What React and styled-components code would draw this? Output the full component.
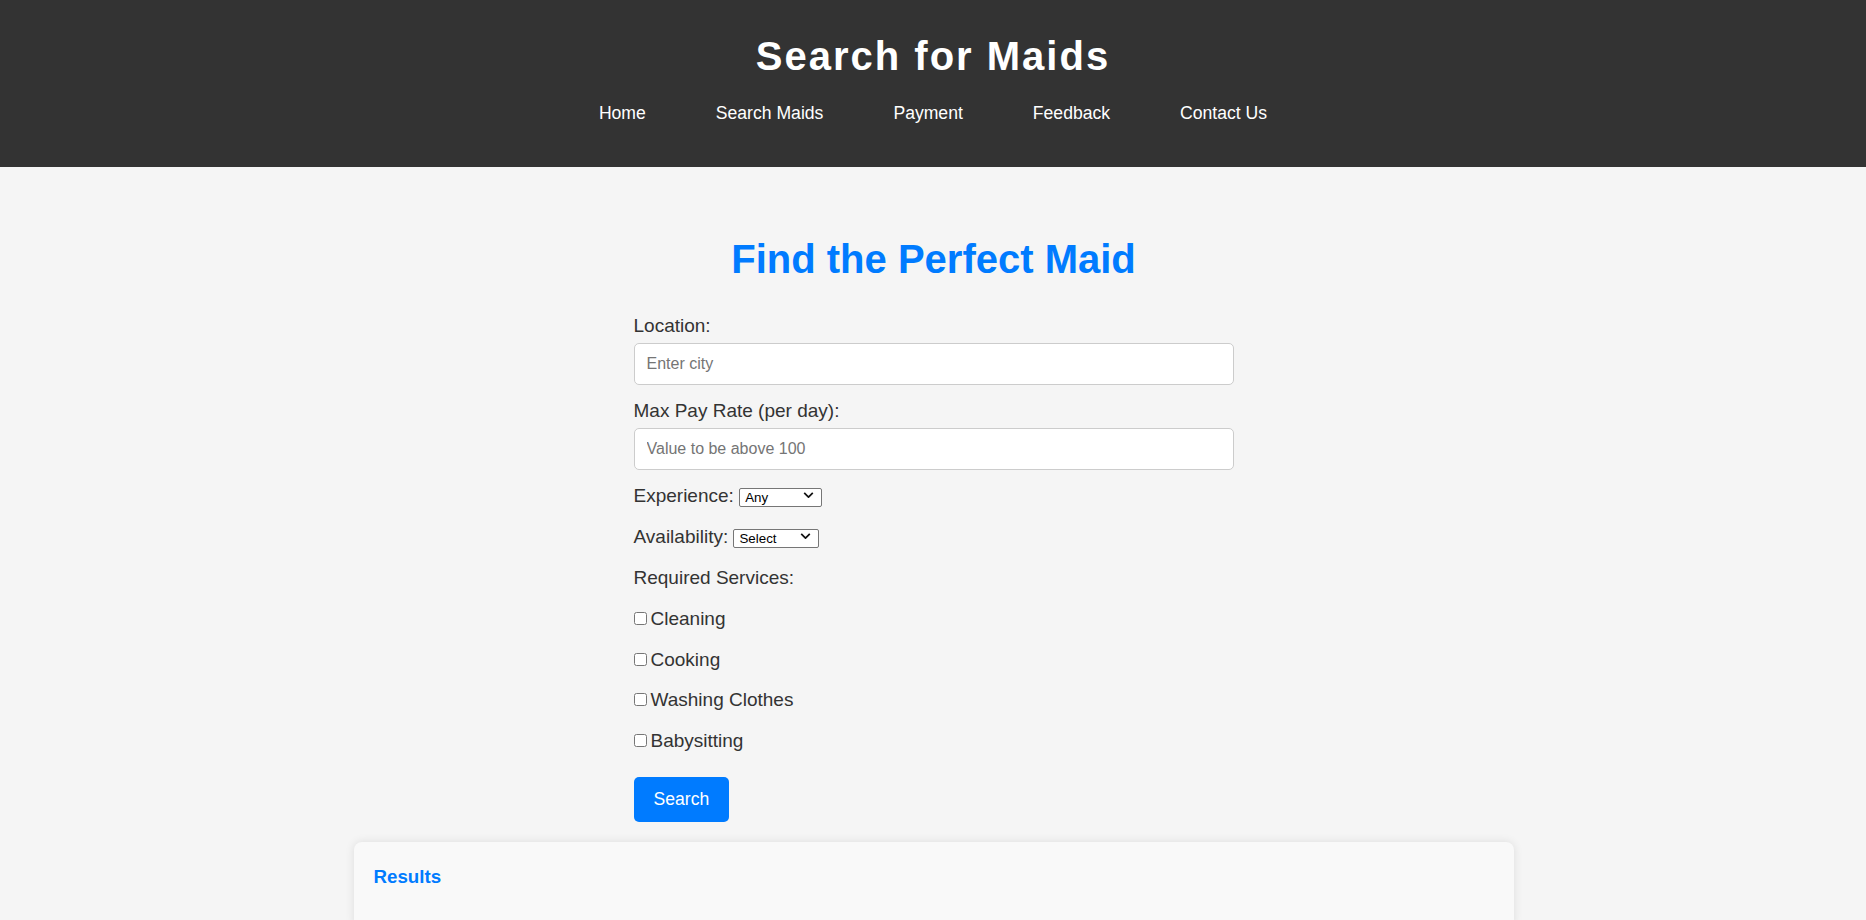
import React from 'react';
import styled, { createGlobalStyle } from 'styled-components';

const GlobalStyle = createGlobalStyle`
    body {
        margin: 0;
        font-family: "Liberation Sans", Arial, sans-serif;
        background-color: #f5f5f5;
        color: #333;
    }
`;

const services = ['Cleaning', 'Cooking', 'Washing Clothes', 'Babysitting'];
const navItems = ['Home', 'Search Maids', 'Payment', 'Feedback', 'Contact Us'];

const Dropdown = ({ width, children, ...rest }) => (
    <SelectWrap>
        <Select $width={width} {...rest}>{children}</Select>
        <Chevron viewBox="0 0 12 7" aria-hidden="true">
            <path d="M1 1l5 5 5-5" />
        </Chevron>
    </SelectWrap>
);

const App = () => {
    return (
        <>
            <GlobalStyle />
            <Header>
                <SiteTitle>Search for Maids</SiteTitle>
                <Nav>
                    {navItems.map((item) => (
                        <NavLink key={item} href="#">{item}</NavLink>
                    ))}
                </Nav>
            </Header>

            <Main>
                <PageTitle>Find the Perfect Maid</PageTitle>
                <SearchForm onSubmit={(e) => e.preventDefault()}>
                    <Label htmlFor="location">Location:</Label>
                    <TextInput id="location" type="text" placeholder="Enter city" />

                    <Label htmlFor="pay">Max Pay Rate (per day):</Label>
                    <TextInput id="pay" type="number" placeholder="Value to be above 100" />

                    <Row>
                        Experience:{' '}
                        <Dropdown width={83} defaultValue="any">
                            <option value="any">Any</option>
                            <option value="1">1+ years</option>
                            <option value="3">3+ years</option>
                            <option value="5">5+ years</option>
                        </Dropdown>
                    </Row>

                    <Row>
                        Availability:{' '}
                        <Dropdown width={86} defaultValue="">
                            <option value="">Select</option>
                            <option value="full">Full-time</option>
                            <option value="part">Part-time</option>
                        </Dropdown>
                    </Row>

                    <Row>Required Services:</Row>

                    {services.map((service) => (
                        <Row as="label" key={service}>
                            <Checkbox type="checkbox" />
                            {service}
                        </Row>
                    ))}

                    <SearchButton type="submit">Search</SearchButton>
                </SearchForm>

                <ResultsCard>
                    <ResultsTitle>Results</ResultsTitle>
                </ResultsCard>
            </Main>
        </>
    );
};

const Header = styled.header`
    background-color: #333;
    color: #fff;
    text-align: center;
    padding: 34px 0 43px;
`;

const SiteTitle = styled.h1`
    margin: 0 0 24px;
    font-size: 40px;
    font-weight: 700;
    letter-spacing: 2px;
    line-height: normal;
`;

const Nav = styled.nav`
    display: flex;
    justify-content: center;
    gap: 70px;
`;

const NavLink = styled.a`
    color: #fff;
    text-decoration: none;
    font-size: 17.6px;
    line-height: normal;
`;

const Main = styled.main`
    padding: 40px 20px 0 21px;
`;

const PageTitle = styled.h2`
    margin: 30px 0 33px;
    text-align: center;
    color: #007bff;
    font-size: 40px;
    font-weight: 700;
    line-height: normal;
`;

const SearchForm = styled.form`
    width: 600px;
    margin: 0 auto;
    display: flex;
    flex-direction: column;
    align-items: flex-start;
`;

const Label = styled.label`
    display: block;
    font-size: 19px;
    line-height: normal;
    margin-bottom: 6px;
`;

const TextInput = styled.input`
    box-sizing: border-box;
    width: 100%;
    height: 42px;
    padding: 0 12px;
    margin: 0 0 15px;
    border: 1px solid #ccc;
    border-radius: 5px;
    background: #fff;
    font-family: inherit;
    font-size: 16px;
    color: #333;

    &::-webkit-outer-spin-button,
    &::-webkit-inner-spin-button {
        -webkit-appearance: none;
        margin: 0;
    }
`;

const Row = styled.div`
    display: block;
    font-size: 19px;
    line-height: normal;
    margin-bottom: 18.9px;
`;

const SelectWrap = styled.span`
    position: relative;
    display: inline-block;
`;

const Select = styled.select`
    appearance: none;
    box-sizing: border-box;
    width: ${(props) => props.$width}px;
    height: 19px;
    padding: 0 18px 0 5px;
    font-family: inherit;
    font-size: 13.33px;
    color: #000;
    background: #fff;
    border: 1px solid #767676;
    border-radius: 2px;
`;

const Chevron = styled.svg`
    position: absolute;
    right: 8px;
    top: 7px;
    width: 11px;
    height: 6px;
    fill: none;
    stroke: #111;
    stroke-width: 2;
    pointer-events: none;
`;

const Checkbox = styled.input`
    width: 13px;
    height: 13px;
    margin: 0 4px 0 0;
`;

const SearchButton = styled.button`
    margin-top: 6px;
    height: 45px;
    padding: 0 20px;
    border: none;
    border-radius: 5px;
    background-color: #007bff;
    color: #fff;
    font-family: inherit;
    font-size: 17.6px;
    cursor: pointer;
`;

const ResultsCard = styled.section`
    box-sizing: border-box;
    width: 1160px;
    margin: 20px auto 0;
    padding: 24px 20px 40px;
    background-color: #f9f9f9;
    border-radius: 8px;
    box-shadow: 0 0 10px rgba(0, 0, 0, 0.1);
`;

const ResultsTitle = styled.h3`
    margin: 0;
    color: #007bff;
    font-size: 18.72px;
    font-weight: 700;
    line-height: normal;
`;

export default App;
